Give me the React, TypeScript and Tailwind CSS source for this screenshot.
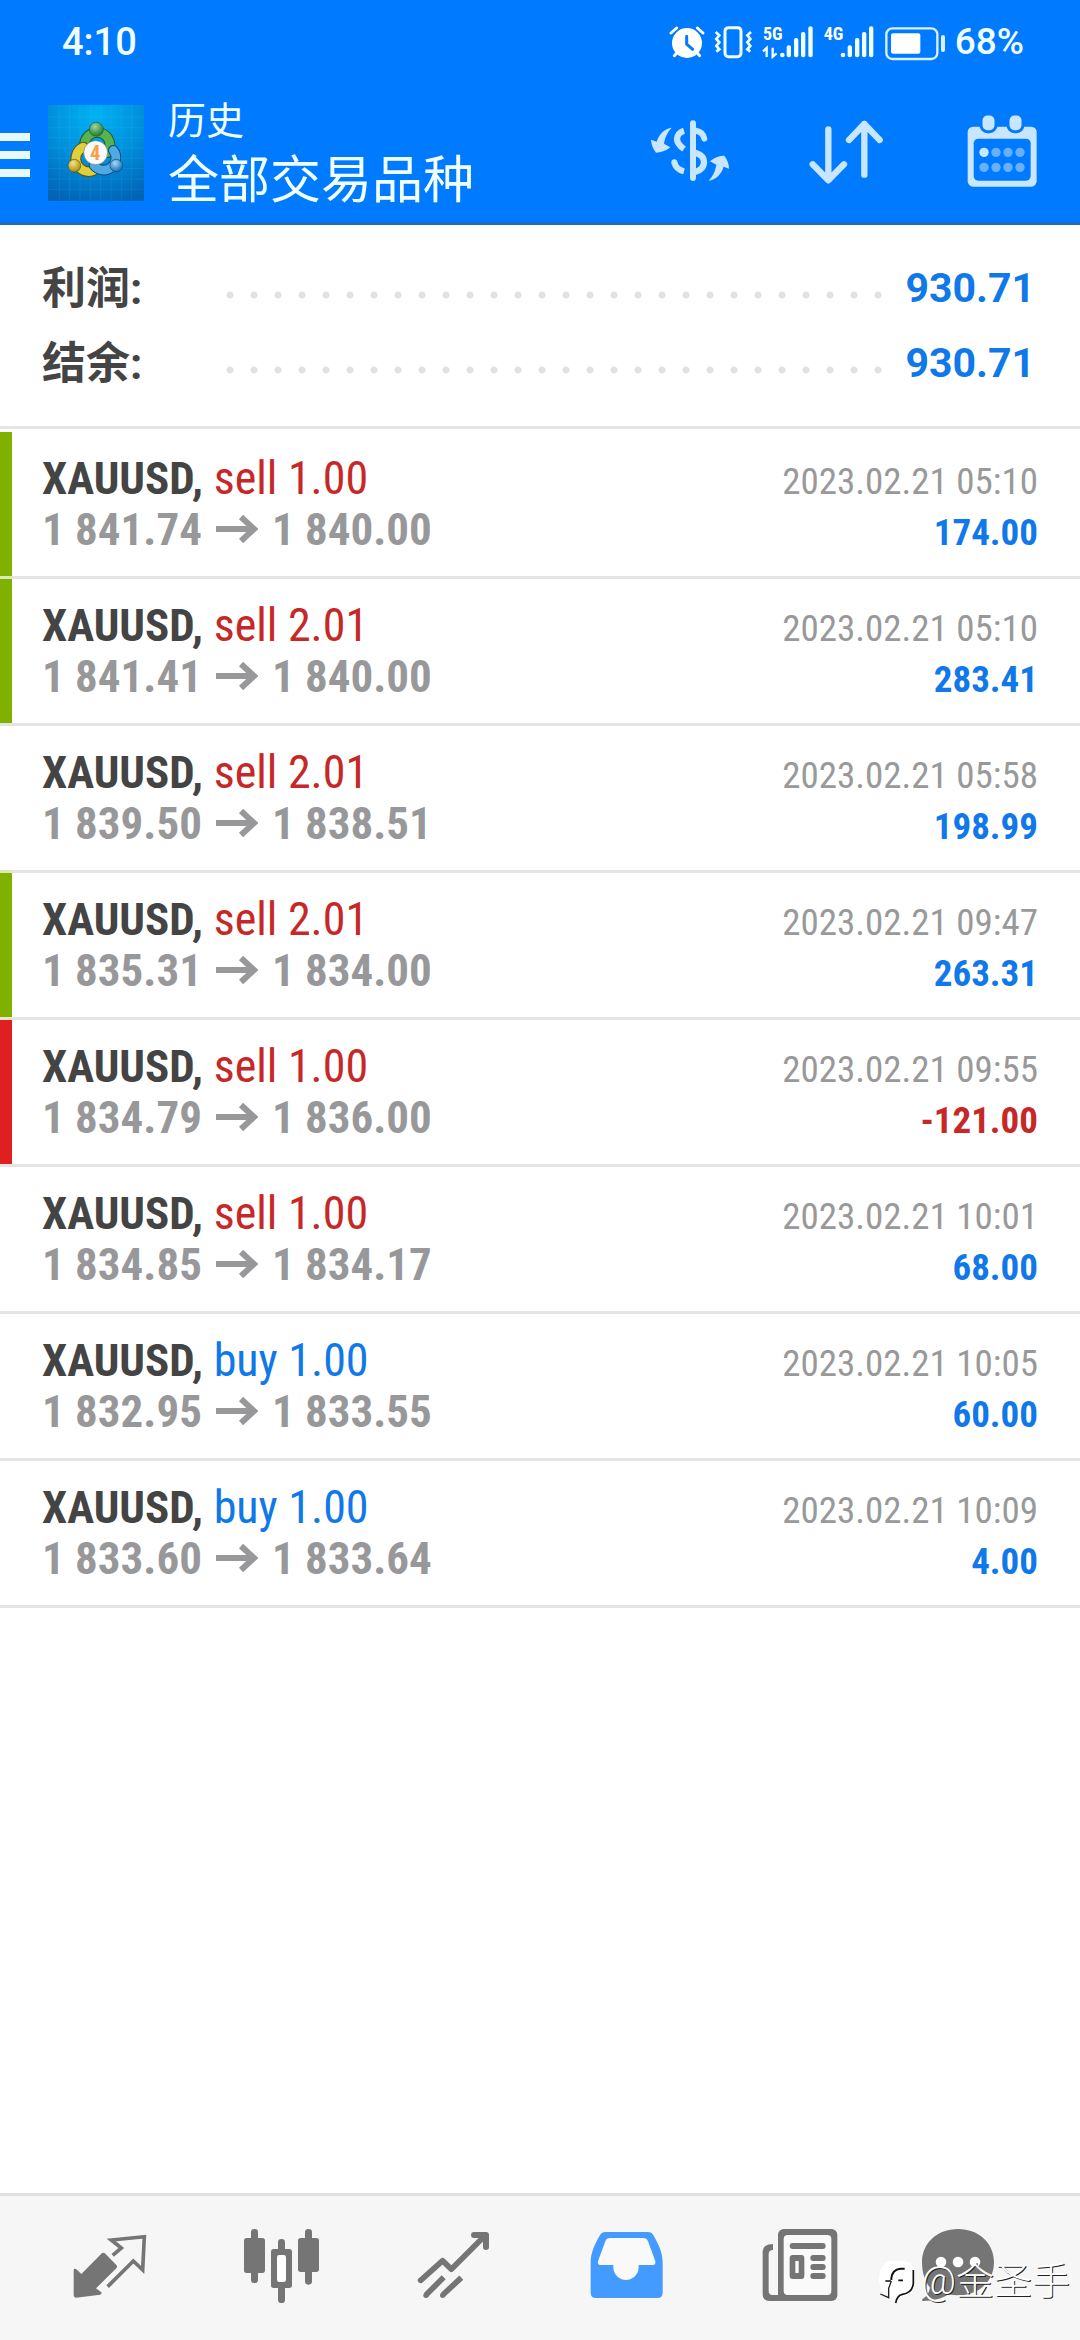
import React from "react";

type Deal = {
  side: "sell" | "buy";
  volume: string;
  open: string;
  close: string;
  time: string;
  profit: string;
  mark?: "tp" | "sl";
};

const DEALS: Deal[] = [
  { side: "sell", volume: "1.00", open: "1 841.74", close: "1 840.00", time: "2023.02.21 05:10", profit: "174.00", mark: "tp" },
  { side: "sell", volume: "2.01", open: "1 841.41", close: "1 840.00", time: "2023.02.21 05:10", profit: "283.41", mark: "tp" },
  { side: "sell", volume: "2.01", open: "1 839.50", close: "1 838.51", time: "2023.02.21 05:58", profit: "198.99" },
  { side: "sell", volume: "2.01", open: "1 835.31", close: "1 834.00", time: "2023.02.21 09:47", profit: "263.31", mark: "tp" },
  { side: "sell", volume: "1.00", open: "1 834.79", close: "1 836.00", time: "2023.02.21 09:55", profit: "-121.00", mark: "sl" },
  { side: "sell", volume: "1.00", open: "1 834.85", close: "1 834.17", time: "2023.02.21 10:01", profit: "68.00" },
  { side: "buy", volume: "1.00", open: "1 832.95", close: "1 833.55", time: "2023.02.21 10:05", profit: "60.00" },
  { side: "buy", volume: "1.00", open: "1 833.60", close: "1 833.64", time: "2023.02.21 10:09", profit: "4.00" },
];

const SUMMARY = [
  { label: "利润:", value: "930.71" },
  { label: "结余:", value: "930.71" },
];

function StatusIcons() {
  return (
    <svg className="w-[280px] h-10" viewBox="138 60 840 120" fill="#fff" stroke="none">
      {/* alarm */}
      <circle cx="198" cy="123" r="45" />
      <path d="M150 93l17-15M246 93l-17-15" stroke="#fff" strokeWidth="9" strokeLinecap="round" />
      <path d="M172 148l-12 13M224 148l12 13" stroke="#fff" strokeWidth="9" strokeLinecap="round" />
      <path d="M197 103v23l18 16" stroke="#007aff" strokeWidth="9" fill="none" strokeLinecap="round" />
      {/* vibrate */}
      <rect x="312" y="77" width="48" height="87" rx="10" fill="none" stroke="#f0ffff" strokeWidth="9" />
      <path d="M284 90l11 10-9 11 9 10-9 11 9 10-9 7M390 90l-11 10 9 11-9 10 9 11-9 10 9 7" fill="none" stroke="#f0ffff" strokeWidth="8" />
      {/* first sim */}
      <text x="426" y="115" fontSize="54" fontWeight="700" className="font-['Roboto_Condensed','Liberation_Sans_Narrow',sans-serif]">5G</text>
      <path d="M437 165v-27l-11 10M455 137v27l12-10" fill="none" stroke="#f0ffff" strokeWidth="7" />
      <g fill="#f0ffff">
        <circle cx="484" cy="159" r="7" />
        <rect x="497" y="130" width="13" height="36" rx="6" />
        <rect x="519" y="108" width="13" height="58" rx="6" />
        <rect x="540" y="90" width="13" height="76" rx="6" />
        <rect x="562" y="73" width="13" height="93" rx="6" />
      </g>
      {/* second sim */}
      <text x="608" y="115" fontSize="54" fontWeight="700" className="font-['Roboto_Condensed','Liberation_Sans_Narrow',sans-serif]">4G</text>
      <g fill="#f0ffff">
        <circle cx="666" cy="159" r="7" />
        <rect x="680" y="130" width="13" height="36" rx="6" />
        <rect x="702" y="108" width="13" height="58" rx="6" />
        <rect x="723" y="90" width="13" height="76" rx="6" />
        <rect x="744" y="73" width="13" height="93" rx="6" />
      </g>
      {/* battery */}
      <rect x="796" y="79" width="153" height="92" rx="18" fill="none" stroke="#d9f0ff" strokeWidth="7" />
      <rect x="810" y="94" width="88" height="61" rx="6" />
      <rect x="960" y="99" width="12" height="51" rx="6" fill="#d9f0ff" />
    </svg>
  );
}

function AppLogo() {
  return (
    <svg className="size-24 shrink-0" viewBox="24 29 288 288">
      <defs>
        <radialGradient id="sky" cx="0.5" cy="0.1" r="0.95">
          <stop offset="0" stopColor="#00b2f4" />
          <stop offset="0.5" stopColor="#0090dc" />
          <stop offset="1" stopColor="#0063b6" />
        </radialGradient>
        <radialGradient id="green" cx="0.4" cy="0.3" r="0.7">
          <stop offset="0" stopColor="#9fd79a" />
          <stop offset="1" stopColor="#1f7a34" />
        </radialGradient>
        <radialGradient id="gold" cx="0.4" cy="0.3" r="0.7">
          <stop offset="0" stopColor="#f3e38a" />
          <stop offset="1" stopColor="#a98c10" />
        </radialGradient>
        <radialGradient id="blue" cx="0.4" cy="0.3" r="0.7">
          <stop offset="0" stopColor="#a5dcf8" />
          <stop offset="1" stopColor="#1668ae" />
        </radialGradient>
      </defs>
      <rect x="24" y="29" width="288" height="288" fill="url(#sky)" />
      <path
        d="M58 29v288M89 29v288M120 29v288M151 29v288M182 29v288M213 29v288M244 29v288M275 29v288M24 65h288M24 96h288M24 127h288M24 158h288M24 189h288M24 220h288M24 251h288M24 282h288"
        stroke="#5cc4f5"
        strokeOpacity="0.2"
        strokeWidth="2"
      />
      <g fill="none" strokeLinecap="round">
        <path d="M134 154a38 38 0 1 1 68 18" stroke="#1c5a2c" strokeWidth="32" />
        <path d="M134 154a38 38 0 1 1 68 18" stroke="#57b34f" strokeWidth="26" />
        <path d="M130 155a36 36 0 1 0 32 70" stroke="#5d5212" strokeWidth="32" />
        <path d="M130 155a36 36 0 1 0 32 70" stroke="#e0cf38" strokeWidth="26" />
        <path d="M220 165a36 36 0 1 1 -58 45" stroke="#0d4a80" strokeWidth="32" />
        <path d="M220 165a36 36 0 1 1 -58 45" stroke="#4fa9e2" strokeWidth="26" />
      </g>
      <circle cx="169" cy="102" r="21" fill="url(#green)" stroke="#1c5a2c" strokeWidth="2" />
      <circle cx="103" cy="211" r="19" fill="url(#gold)" stroke="#5d5212" strokeWidth="2" />
      <circle cx="229" cy="211" r="19" fill="url(#blue)" stroke="#0d4a80" strokeWidth="2" />
      <circle cx="167" cy="172" r="36" fill="#fafafa" stroke="#6d7a6a" strokeWidth="2" />
      <text x="166" y="194" fontSize="62" fontWeight="700" textAnchor="middle" fill="#f5a04c" className="font-['Roboto_Condensed','Liberation_Sans_Narrow',sans-serif]">
        4
      </text>
    </svg>
  );
}

function CurrencyIcon() {
  return (
    <svg className="size-20" viewBox="90 340 240 240" fill="none" stroke="#c8e6ff">
      <path d="M219 371v164" strokeWidth="18" strokeLinecap="round" />
      <path d="M192 393c-13 4-21 14-21 25 0 12 7 20 21 30" strokeWidth="19" />
      <path d="M163 488c3 15 14 23 29 27" strokeWidth="18" />
      <circle cx="163" cy="488" r="9" fill="#c8e6ff" stroke="none" />
      <path d="M228 393c13 2 22 11 25 24" strokeWidth="18" strokeLinecap="round" />
      <path d="M226 459c16 5 26 14 26 28 0 15-11 26-26 30" strokeWidth="19" />
      <g fill="#c8e6ff" stroke="none">
        <path d="M155 384c-21 3-37 17-45 42l-17-6c1 15 6 27 15 39 15 0 29-5 43-16l-19-11c3-18 9-33 23-48z" />
        <path d="M266 543c21-3 37-17 45-42l16 6c0-14-5-27-14-39-15 0-29 5-43 17l19 10c-3 18-9 33-23 48z" />
      </g>
    </svg>
  );
}

function SortIcon() {
  return (
    <svg className="size-20" viewBox="557 340 240 240" fill="none" stroke="#c8e6ff" strokeWidth="19" strokeLinecap="round" strokeLinejoin="round">
      <path d="M624 389v152M577 494l47 48 47-48M732 525V373M686 421l46-48 46 48" />
    </svg>
  );
}

function CalendarIcon() {
  return (
    <svg className="size-20" viewBox="1027 340 240 240">
      <rect x="1044" y="381" width="207" height="180" rx="16" fill="#c8e6ff" />
      <rect x="1062" y="417" width="171" height="126" rx="14" fill="#007aff" />
      <g fill="#c8e6ff" stroke="#007aff" strokeWidth="9">
        <rect x="1084" y="343" width="45" height="53" rx="19" />
        <rect x="1165" y="343" width="45" height="53" rx="19" />
      </g>
      <g fill="#66b0ff">
        <circle cx="1093" cy="458" r="14" fill="#c8ecff" />
        <circle cx="1129" cy="458" r="14" />
        <circle cx="1165" cy="458" r="14" />
        <circle cx="1201" cy="458" r="14" />
        <circle cx="1093" cy="503" r="14" />
        <circle cx="1129" cy="503" r="14" />
        <circle cx="1165" cy="503" r="14" />
        <circle cx="1201" cy="503" r="14" />
      </g>
    </svg>
  );
}

function PriceArrow() {
  return (
    <svg className="w-[42px] h-8" viewBox="0 0 42 32" fill="none" stroke="currentColor" strokeWidth="6">
      <path d="M0 15h38M25 3l13 12-13 12" />
    </svg>
  );
}

const TABS = [
  {
    label: "行情",
    icon: (
      <svg className="size-24" viewBox="186 120 288 288" fill="#757575">
        <path d="M304 221q6-5 12 0l33 34q4 5 0 10l-61 60 16 12q2 6-4 7l-72 9q-7 0-7-7v-76q2-6 8-2l15 14z" />
        <path d="M338 226l26-22-30-24 99-10-5 100-28-27-77 77" fill="none" stroke="#757575" strokeWidth="11" />
      </svg>
    ),
  },
  {
    label: "图表",
    icon: (
      <svg className="size-24" viewBox="702 120 288 288" fill="#757575">
        <rect x="753" y="147" width="21" height="162" rx="10" />
        <rect x="732" y="174" width="63" height="105" rx="8" />
        <rect x="834" y="177" width="21" height="192" rx="10" />
        <rect x="813" y="207" width="63" height="117" rx="8" />
        <rect x="831" y="225" width="27" height="81" rx="7" fill="#fff" />
        <rect x="915" y="147" width="21" height="167" rx="10" />
        <rect x="894" y="174" width="63" height="102" rx="8" />
      </svg>
    ),
  },
  {
    label: "交易",
    icon: (
      <svg className="size-24" viewBox="138 120 288 288" fill="none" stroke="#757575" strokeWidth="17" strokeLinejoin="round">
        <path d="M182 301l66-59 26 26L376 166" strokeLinecap="round" />
        <path d="M342 165h36v36" strokeWidth="18" strokeLinecap="round" />
        <path d="M251 292l-53 53M304 293l-56 52" />
        <circle cx="198" cy="346" r="8" fill="#757575" stroke="none" />
        <circle cx="248" cy="346" r="8" fill="#757575" stroke="none" />
      </svg>
    ),
  },
  {
    label: "历史",
    icon: (
      <svg className="size-24" viewBox="654 120 288 288">
        <path d="M736 156h128q11 0 16 10c16 27 28 52 28 82v90q0 16-16 16H708q-16 0-16-16v-90c0-30 12-55 28-82q5-10 16-10z" fill="#439bff" />
        <path d="M750 174h100q10 0 14 10l22 60q2 11-8 11h-42v7a38 38 0 0 1-76 0v-7h-38q-10 0-8-11l22-60q4-10 14-10z" fill="#f9f9f9" />
      </svg>
    ),
  },
  {
    label: "新闻",
    icon: (
      <svg className="size-24" viewBox="90 120 288 288">
        <path d="M159 192v18q-13 0-13 13v110q0 12 12 12h16v18h-26q-20 0-20-20V215q0-23 31-23z" fill="#757575" />
        <rect x="174" y="147" width="178" height="216" rx="17" fill="#757575" />
        <path d="M150 345h40v18h-40z" fill="#757575" />
        <rect x="191" y="165" width="143" height="180" rx="12" fill="#fafafa" />
        <g fill="#757575">
          <rect x="209" y="189" width="108" height="18" rx="9" />
          <rect x="209" y="225" width="44" height="72" rx="9" />
          <rect x="271" y="225" width="46" height="18" rx="9" />
          <rect x="271" y="252" width="46" height="18" rx="9" />
          <rect x="271" y="279" width="46" height="18" rx="9" />
        </g>
        <rect x="226" y="243" width="10" height="36" fill="#fafafa" />
      </svg>
    ),
  },
  {
    label: "消息",
    icon: (
      <svg className="size-24" viewBox="606 120 288 288">
        <path d="M714 147c62 0 108 42 108 100s-46 99-108 99c-10 0-20-1-29-3-20 14-48 20-75 20-5 0-5-5-1-7 12-8 19-20 21-33-15-18-24-45-24-76 0-58 46-100 108-100z" fill="#757575" />
        <g fill="#fff">
          <circle cx="663" cy="246" r="16" />
          <circle cx="714" cy="246" r="16" />
          <circle cx="765" cy="246" r="16" />
        </g>
      </svg>
    ),
  },
];

const STRIPES = {
  none: "border-[#e4e4e4]",
  tp: "border-[#d9eab3] bg-[#80b000]",
  sl: "border-[#ece6cc] bg-[#e02020]",
};

function DealRow({ deal }: { deal: Deal }) {
  return (
    <li className="group flex items-stretch">
      <div className={`w-3 shrink-0 border-t-3 group-first:border-white ${STRIPES[deal.mark ?? "none"]}`} />
      <div className="flex-1 border-t-3 border-[#e4e4e4] py-[21px] pr-[42px] pl-[30px] font-['Roboto_Condensed','Liberation_Sans_Narrow',sans-serif] group-first:border-white">
        <div className="flex h-[51px] items-baseline justify-between leading-[51px]">
          <p className="text-[46px] text-[#444]">
            <span className="text-[45px] font-bold">XAUUSD,</span>{" "}
            <span className={deal.side === "sell" ? "text-[#c62828]" : "text-[#1078e8]"}>
              {deal.side} {deal.volume}
            </span>
          </p>
          <time className="text-[37px] text-[#999]">{deal.time}</time>
        </div>
        <div className="flex h-[51px] items-baseline justify-between leading-[51px] font-bold">
          <p className="flex items-center gap-[14px] text-[45px] text-[#98989b]">
            <span>{deal.open}</span>
            <PriceArrow />
            <span>{deal.close}</span>
          </p>
          <span className={`text-[37px] ${deal.profit.startsWith("-") ? "text-[#c62828]" : "text-[#1078e8]"}`}>{deal.profit}</span>
        </div>
      </div>
    </li>
  );
}

export default function App() {
  return (
    <div className="relative flex min-h-screen w-full flex-col bg-white font-['Roboto','Noto_Sans_CJK_SC',sans-serif]">
      <header className="border-b-3 border-[#1a6fc4] bg-[#007aff] text-[#f0ffff]">
        <div className="flex h-[84px] items-center justify-between pl-[62px] pr-[56px]">
          <span className="text-[38px] leading-10 font-medium">4:10</span>
          <div className="flex items-center gap-2">
            <StatusIcons />
            <span className="text-[37px] leading-10 font-medium">68%</span>
          </div>
        </div>

        <div className="flex h-[138px] items-center pr-[38px]">
          <button type="button" aria-label="菜单" className="mr-[18px] flex w-[30px] flex-col gap-[10px] pt-1">
            <span className="h-2 bg-[#e8faff]" />
            <span className="h-2 bg-[#e8faff]" />
            <span className="h-2 bg-[#e8faff]" />
          </button>
          <AppLogo />
          <div className="ml-6 flex-1 pt-2">
            <p className="text-[38px] leading-[48px]">历史</p>
            <h1 className="text-[51px] leading-[72px]">全部交易品种</h1>
          </div>
          <div className="flex gap-[76px]">
            <button type="button" aria-label="交易品种"><CurrencyIcon /></button>
            <button type="button" aria-label="排序"><SortIcon /></button>
            <button type="button" aria-label="日期"><CalendarIcon /></button>
          </div>
        </div>
      </header>

      <main className="flex-1">
        <dl className="border-b-3 border-[#e4e4e4] pt-[26px] pr-[45px] pb-[25px] pl-[42px]">
          {SUMMARY.map((item) => (
            <div key={item.label} className="flex h-[75px] items-center font-bold">
              <dt className="w-44 text-[44px] text-[#444]">{item.label}</dt>
              <dd className="flex flex-1 items-center gap-4 text-[41px] text-[#1078e8]">
                <span className="mt-3 h-6 flex-1 bg-[radial-gradient(circle,#e2e2e2_3px,transparent_4px)] bg-[length:24px_24px] bg-repeat-x" />
                {item.value}
              </dd>
            </div>
          ))}
        </dl>

        <ul className="border-b-3 border-[#e4e4e4]">
          {DEALS.map((deal) => (
            <DealRow key={deal.profit} deal={deal} />
          ))}
        </ul>
      </main>

      <nav className="flex border-t-3 border-[#e0e0e0] bg-[#f6f6f6] px-6">
        {TABS.map((tab) => (
          <button key={tab.label} type="button" aria-label={tab.label} className="flex h-36 flex-1 items-center justify-center">
            {tab.icon}
          </button>
        ))}
      </nav>

      {/* author mark over the tab bar */}
      <div className="pointer-events-none absolute right-[10px] bottom-8 flex items-center gap-[6px]">
        <svg className="w-[38px] h-[45px]" viewBox="20 55 114 135">
          <path d="M62 60h36q34 4 34 36v32q-2 34-34 38-14 4-20 24l-8-22q-42-2-44-50 2-54 36-58z" fill="#fff" />
          <path d="M63 118v-6q3-25 27-28h13" fill="none" stroke="#111" strokeWidth="6" />
          <path d="M84 119h14M45 121h17" fill="none" stroke="#111" strokeWidth="5" />
          <path d="M129 88v40q-3 29-33 33-16 3-20 26" fill="none" stroke="#111" strokeWidth="5" />
          <path d="M63 121l-8 22v28L30 160" fill="none" stroke="#222" strokeWidth="4" />
        </svg>
        <span className="text-[38px] leading-[54px] font-light text-white [text-shadow:1px_1px_0_#222]">@金圣手</span>
      </div>
    </div>
  );
}
